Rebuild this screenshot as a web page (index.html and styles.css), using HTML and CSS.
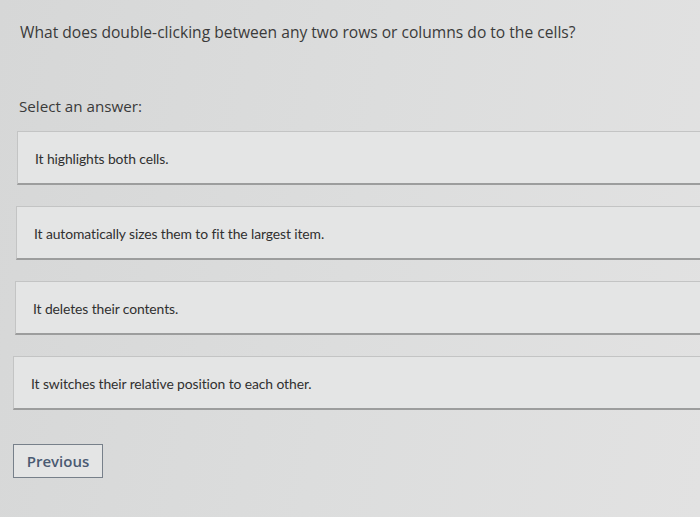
FILE: index.html
```html
<!DOCTYPE html>
<html>
<head>
<meta charset="utf-8">
<link rel="stylesheet" href="styles.css">
</head>
<body>
<div class="page">
  <p class="question">What does double-clicking between any two rows or columns do to the cells?</p>
  <p class="prompt">Select an answer:</p>
  <div class="answers">
    <div class="answer a1">It highlights both cells.</div>
    <div class="answer a2">It automatically sizes them to fit the largest item.</div>
    <div class="answer a3">It deletes their contents.</div>
    <div class="answer a4">It switches their relative position to each other.</div>
  </div>
  <button class="prev">Previous</button>
</div>
</body>
</html>
```
FILE: styles.css
```css
html, body {
  margin: 0;
  padding: 0;
  width: 700px;
  height: 517px;
  overflow: hidden;
  background: #d9dada;
}
.page {
  height: 517px;
  box-sizing: border-box;
  padding: 22px 0 0 0;
  font-family: "Open Sans", sans-serif;
  color: #3a3a3a;
  background: linear-gradient(100deg, #d6d7d7 0%, #dcdddd 50%, #e2e2e2 100%);
}
.question {
  margin: 0 0 0 20px;
  font-size: 15.6px;
  line-height: 21px;
}
.prompt {
  margin: 53px 0 0 19px;
  font-size: 15.2px;
  line-height: 21px;
}
.answers {
  display: flex;
  flex-direction: column;
  gap: 21px;
  margin-top: 14px;
}
.answer {
  margin-right: -10px;
  height: 54px;
  box-sizing: border-box;
  display: flex;
  align-items: center;
  padding-top: 2px;
  background: #e4e5e5;
  border: 1px solid #c3c4c4;
  border-bottom: 2px solid #9c9d9d;
  font-family: "Lato", sans-serif;
  font-size: 13.9px;
  color: #303030;
  letter-spacing: -0.1px;
}
.a1 { margin-left: 17px; padding-left: 17px; }
.a2 { margin-left: 16px; padding-left: 17px; }
.a3 { margin-left: 15px; padding-left: 17px; }
.a4 { margin-left: 13px; padding-left: 17px; }
.prev {
  margin: 34px 0 0 13px;
  width: 90px;
  height: 34px;
  background: #e4e5e5;
  border: 1.5px solid #77808a;
  color: #4a5a72;
  font-family: "Open Sans", sans-serif;
  font-weight: 600;
  font-size: 15px;
  padding: 0;
}
```
